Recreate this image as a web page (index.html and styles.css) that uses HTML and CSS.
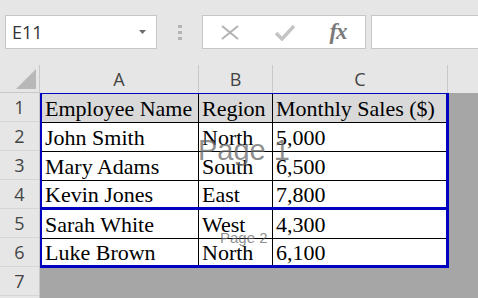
FILE: index.html
```html
<!DOCTYPE html>
<html lang="en">
<head>
    <meta charset="UTF-8">
    <title>Sales Sheet</title>
    <link rel="stylesheet" href="styles.css">
</head>
<body>
    <div class="toolbar">
        <div class="namebox">
            <span>E11</span>
            <svg class="drop" width="7" height="4" viewBox="0 0 7 4"><polygon points="0,0 7,0 3.5,4" fill="#6b6b6b"/></svg>
        </div>
        <div class="grip">
            <svg width="4" height="15" viewBox="0 0 4 15">
                <rect x="0" y="0" width="4" height="3" fill="#b4b4b4"/>
                <rect x="0" y="6" width="4" height="3" fill="#b4b4b4"/>
                <rect x="0" y="12" width="4" height="3" fill="#b4b4b4"/>
            </svg>
        </div>
        <div class="fx-group">
            <div class="fx-slot">
                <svg width="18" height="15" viewBox="0 0 18 15"><path d="M1 1 L17 14 M17 1 L1 14" stroke="#b3b3b3" stroke-width="2" fill="none"/></svg>
            </div>
            <div class="fx-slot">
                <svg width="21" height="17" viewBox="0 0 21 17"><polyline points="2,9 8,15 20,2" stroke="#c4c4c4" stroke-width="3.5" fill="none"/></svg>
            </div>
            <div class="fx-slot"><span class="fx">fx</span></div>
        </div>
        <div class="formula"></div>
    </div>

    <div class="sheet">
        <div class="row-heads">
            <div class="corner">
                <svg width="20" height="20" viewBox="0 0 20 20"><polygon points="20,0 20,20 0,20" fill="#b8b8b8"/></svg>
            </div>
            <div class="row-num">1</div>
            <div class="row-num">2</div>
            <div class="row-num">3</div>
            <div class="row-num">4</div>
            <div class="row-num">5</div>
            <div class="row-num">6</div>
            <div class="row-num">7</div>
        </div>

        <div class="body">
            <div class="col-heads">
                <div class="col-a">A</div>
                <div class="col-b">B</div>
                <div class="col-c">C</div>
            </div>

            <div class="page page-one">
                <div class="cell head">Employee Name</div>
                <div class="cell head">Region</div>
                <div class="cell head">Monthly Sales ($)</div>
                <div class="cell">John Smith</div>
                <div class="cell">North</div>
                <div class="cell">5,000</div>
                <div class="cell">Mary Adams</div>
                <div class="cell">South</div>
                <div class="cell">6,500</div>
                <div class="cell last">Kevin Jones</div>
                <div class="cell last">East</div>
                <div class="cell last">7,800</div>
            </div>

            <div class="page page-two">
                <div class="cell">Sarah White</div>
                <div class="cell">West</div>
                <div class="cell">4,300</div>
                <div class="cell last">Luke Brown</div>
                <div class="cell last">North</div>
                <div class="cell last">6,100</div>
            </div>

            <span class="mark mark-one">Page 1</span>
            <span class="mark mark-two">Page 2</span>
        </div>
    </div>
</body>
</html>
```

FILE: styles.css
```css
body {
    margin: 0;
    width: 478px;
    height: 298px;
    overflow: hidden;
    background-color: #e6e6e6;
    font-family: "Open Sans", sans-serif;
}

/* formula bar */
.toolbar {
    display: flex;
    height: 65px;
    padding: 15px 0 0 5px;
    box-sizing: border-box;
    background-color: #e6e6e6;
}

.namebox {
    display: flex;
    align-items: center;
    justify-content: space-between;
    width: 152px;
    height: 34px;
    box-sizing: border-box;
    padding: 0 10px 0 6px;
    background-color: #fff;
    border: 1px solid #c6c6c6;
    font-size: 18px;
    color: #333;
}

.grip {
    display: flex;
    justify-content: center;
    align-items: center;
    width: 45px;
    height: 34px;
}

.fx-group {
    display: flex;
    width: 164px;
    height: 34px;
    box-sizing: border-box;
    background-color: #fff;
    border: 1px solid #c6c6c6;
}

.fx-slot {
    display: flex;
    align-items: center;
    justify-content: center;
    width: 54px;
}

.fx {
    font-family: "Liberation Serif", serif;
    font-style: italic;
    font-weight: bold;
    font-size: 23px;
    color: #7a7a7a;
    letter-spacing: -1px;
}

.formula {
    flex: 1;
    height: 34px;
    margin-left: 5px;
    box-sizing: border-box;
    background-color: #fff;
    border: 1px solid #c6c6c6;
    border-right: none;
}

/* grid */
.sheet {
    display: flex;
}

.row-heads {
    width: 40px;
    flex-shrink: 0;
    box-sizing: border-box;
    border-right: 1px solid #c8c8c8;
    background-color: #e6e6e6;
}

.corner {
    display: flex;
    justify-content: flex-end;
    align-items: flex-end;
    height: 28px;
    box-sizing: border-box;
    padding: 0 3px 3px 0;
    border-bottom: 1px solid #c8c8c8;
}

.row-num {
    height: 29px;
    line-height: 28px;
    box-sizing: border-box;
    border-bottom: 1px solid #d6d6d6;
    text-align: center;
    font-size: 18px;
    color: #444;
}

.body {
    position: relative;
    flex: 1;
    height: 233px;
    background-color: #a6a6a6;
}

.col-heads {
    display: flex;
    height: 28px;
    background-color: #e6e6e6;
}

.col-heads div {
    box-sizing: border-box;
    border-right: 1px solid #c8c8c8;
    text-align: center;
    line-height: 28px;
    font-size: 18px;
    color: #444;
}

.col-a { width: 159px; }
.col-b { width: 74px; }
.col-c { width: 175px; }

/* printed pages */
.page {
    display: grid;
    grid-template-columns: 157px 74px 173px;
    width: 409px;
    box-sizing: border-box;
    background-color: #fff;
    border: 3px solid #0000c0;
    border-left-width: 2px;
}

.page-one {
    border-top-width: 1px;
}

.page-two {
    border-top: none;
}

.cell {
    height: 29px;
    line-height: 29px;
    box-sizing: border-box;
    padding-left: 3px;
    border-right: 1px solid #000;
    border-bottom: 1px solid #000;
    font-family: "Liberation Serif", serif;
    font-size: 22px;
    color: #000;
    white-space: nowrap;
    overflow: hidden;
}

.cell:nth-child(3n) {
    border-right: none;
}

.cell.last {
    height: 26px;
    line-height: 27px;
    border-bottom: none;
}

.cell.head {
    background-color: #d9d9d9;
}

/* page watermarks */
.mark {
    position: absolute;
    font-family: "Liberation Sans", sans-serif;
    line-height: 1;
    color: rgba(105, 105, 105, 0.75);
    white-space: nowrap;
}

.mark-one {
    left: 158px;
    top: 71px;
    font-size: 29px;
}

.mark-two {
    left: 180px;
    top: 165px;
    font-size: 15px;
}
```
